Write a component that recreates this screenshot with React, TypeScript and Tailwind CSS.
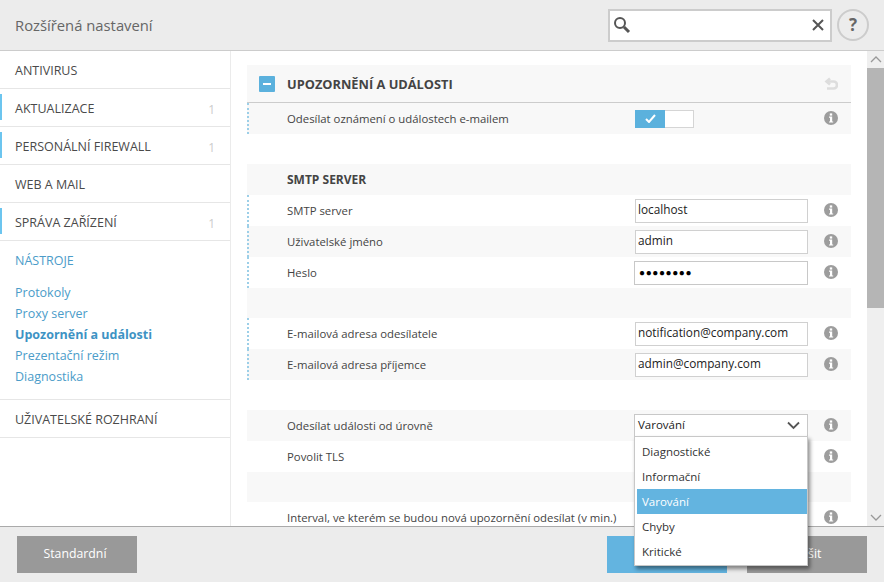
import React from "react";

const F = "font-['Open_Sans','Noto_Sans',sans-serif]";

function Info() {
  return (
    <svg width="14" height="14" viewBox="0 0 14 14" className="shrink-0">
      <circle cx="7" cy="7" r="7" fill="#9d9d9d" />
      <rect x="5.8" y="2.4" width="2.4" height="2.2" fill="#fff" />
      <path d="M5 5.6h3.2v4.8h1v1.2H5v-1.2h1V6.8H5z" fill="#fff" />
    </svg>
  );
}

function Row({ label, gray, children, info = true, bold, dot }: { label?: string; gray?: boolean; children?: React.ReactNode; info?: boolean; bold?: boolean; dot?: boolean }) {
  return (
    <div className={`flex h-[31px] shrink-0 items-center border-l-2 border-dotted ${dot ? "border-[#9ccfe8]" : "border-transparent"} ${gray ? "bg-[#f8f8f8]" : "bg-white"}`}>
      <div className={`ml-[38px] w-[347px] shrink-0 whitespace-nowrap leading-none ${bold ? "text-[12px] font-bold" : "text-[11.35px]"} text-[#444444]`}>{label}</div>
      <div className="w-[174px] shrink-0">{children}</div>
      <div className="ml-[16px] flex w-[14px] justify-center pb-px">{info && <Info />}</div>
    </div>
  );
}

function Field({ value }: { value: string }) {
  return (
    <div className="ml-px flex h-[24px] w-[173px] items-center border border-[#d0d0d0] bg-white pb-px pl-[2px] text-[11.8px] text-[#222222]">
      {value}
    </div>
  );
}

function Side({ label, mark, n }: { label: string; mark?: boolean; n?: boolean }) {
  return (
    <div className="relative flex h-[38px] items-center border-b border-[#e6e6e6] pl-[15px] pr-[15px] pt-[4px] text-[12.5px] text-[#4a4a4a]">
      {mark && <div className="absolute left-0 top-[5px] h-[26px] w-[2px] bg-[#6cc5ef]" />}
      <span className="flex-1">{label}</span>
      {n && <span className="text-[12px] text-[#cccccc]">1</span>}
    </div>
  );
}

function Btn({ label, blue }: { label: string; blue?: boolean }) {
  return (
    <div className={`flex h-[37px] w-[120px] items-center justify-center pr-[4px] text-[12.3px] text-white ${blue ? "bg-[#63b4e0]" : "bg-[#999999]"}`}>{label}</div>
  );
}

export default function App() {
  return (
    <div className={`relative flex h-[582px] w-[884px] flex-col overflow-hidden bg-white ${F}`}>
      <header className="flex h-[51px] shrink-0 items-center border-b border-[#cccccc] bg-[#ececec] pl-[15px] pr-[15px]">
        <h1 className="flex-1 text-[14.8px] text-[#666666]">Rozšířená nastavení</h1>
        <div className="flex h-[33px] w-[224px] items-center justify-between border-2 border-[#cccccc] bg-white pl-[3px] pr-[6px]">
          <svg width="18" height="18" viewBox="0 0 18 18" fill="none" stroke="#555555">
            <circle cx="7" cy="7" r="5" strokeWidth="2" />
            <path d="M11 11l5 5" strokeWidth="3" />
          </svg>
          <svg width="12" height="12" viewBox="0 0 12 12" stroke="#555555" strokeWidth="2">
            <path d="M1 1l10 10M11 1L1 11" />
          </svg>
        </div>
        <div className="ml-[5px] flex h-[32px] w-[32px] items-center justify-center rounded-full border-2 border-[#cccccc] text-[17px] font-bold text-[#666666]">?</div>
      </header>

      <div className="flex min-h-0 flex-1">
        <aside className="w-[231px] shrink-0 border-r border-[#ebebeb]">
          <Side label="ANTIVIRUS" />
          <Side label="AKTUALIZACE" mark n />
          <Side label="PERSONÁLNÍ FIREWALL" mark n />
          <Side label="WEB A MAIL" />
          <Side label="SPRÁVA ZAŘÍZENÍ" mark n />
          <div className="h-[159px] border-b border-[#e6e6e6] pl-[15px] text-[#4b9cc9]">
            <div className="pt-[10px] text-[12.5px] leading-[19px]">NÁSTROJE</div>
            <div className="mt-[12px] flex flex-col text-[12.5px] leading-[21px]">
              <span>Protokoly</span>
              <span>Proxy server</span>
              <span className="font-bold text-[#3d93c4]">Upozornění a události</span>
              <span>Prezentační režim</span>
              <span>Diagnostika</span>
            </div>
          </div>
          <Side label="UŽIVATELSKÉ ROZHRANÍ" />
        </aside>

        <main className="relative min-w-0 flex-1 overflow-hidden pl-4 pt-[14px]">
          <div className="w-[604px]">
            <div className="flex h-[38px] items-center border-b border-[#cccccc] bg-[#f8f8f8] pl-3 pr-[13px]">
              <div className="flex h-4 w-4 items-center justify-center rounded-[1px] bg-[#5bb1dd]">
                <div className="h-[2px] w-2 bg-white" />
              </div>
              <div className="ml-3 flex-1 pt-[3px] text-[12.8px] font-bold text-[#444444]">UPOZORNĚNÍ A UDÁLOSTI</div>
              <svg width="14" height="14" viewBox="0 0 14 14" fill="none" stroke="#dddddd" strokeWidth="2.6">
                <path d="M6 1.5L2.5 4.5 6 7.5" />
                <path d="M3 4.5h6.5a3.5 3.5 0 010 7H3" />
              </svg>
            </div>

            <Row label="Odesílat oznámení o událostech e-mailem" gray dot>
              <div className="ml-px flex h-[18px] w-[59px] border border-[#d5d5d5] bg-white">
                <div className="-m-px flex h-[18px] w-[30px] items-center justify-center bg-[#5bb1dd]">
                  <svg width="11" height="9" viewBox="0 0 11 9" fill="none" stroke="#fff" strokeWidth="2">
                    <path d="M1 5l3 3 6-7" />
                  </svg>
                </div>
              </div>
            </Row>
            <div className="h-[30px]" />
            <Row label="SMTP SERVER" gray bold info={false} />
            <Row label="SMTP server" dot><Field value="localhost" /></Row>
            <Row label="Uživatelské jméno" gray dot><Field value="admin" /></Row>
            <Row label="Heslo" dot>
              <div className="flex h-[24px] w-[174px] items-center border border-[#c8c8c8] bg-white pl-[4px] text-[10px] tracking-[0.6px] text-black">●●●●●●●●</div>
            </Row>
            <div className="h-[30px] bg-[#f8f8f8]" />
            <Row label="E-mailová adresa odesílatele" dot><Field value="notification@company.com" /></Row>
            <Row label="E-mailová adresa příjemce" gray dot><Field value="admin@company.com" /></Row>
            <div className="h-[30px]" />
            <Row label="Odesílat události od úrovně" gray>
              <div className="flex h-[24px] w-[174px] items-center justify-between border border-[#c8c8c8] bg-white pb-px pl-[3px] pr-[7px] text-[11.5px] text-[#222222]">
                Varování
                <svg width="13" height="9" viewBox="0 0 13 9" fill="none" stroke="#555555" strokeWidth="1.8">
                  <path d="M1 1.5l5.5 5.5L12 1.5" />
                </svg>
              </div>
            </Row>
            <Row label="Povolit TLS" />
            <div className="h-[30px] bg-[#f8f8f8]" />
            <Row label="Interval, ve kterém se budou nová upozornění odesílat (v min.)" />
          </div>
          <div className="absolute bottom-0 right-0 top-0 flex w-[17px] flex-col bg-[#efefef]">
            <div className="flex h-[17px] items-center justify-center">
              <svg width="12" height="7" viewBox="0 0 12 7" fill="none" stroke="#999999" strokeWidth="1.3">
                <path d="M1 6l5-5 5 5" />
              </svg>
            </div>
            <div className="h-[240px] bg-[#b5b5b5]" />
            <div className="flex-1" />
            <div className="flex h-[17px] items-center justify-center">
              <svg width="12" height="7" viewBox="0 0 12 7" fill="none" stroke="#999999" strokeWidth="1.3">
                <path d="M1 1l5 5 5-5" />
              </svg>
            </div>
          </div>
        </main>
      </div>

      <footer className="flex h-[56px] shrink-0 items-start border-t border-[#aaaaaa] bg-[#ececec] pl-[17px] pr-[17px] pt-[9px]">
        <Btn label="Standardní" />
        <div className="flex-1" />
        <Btn label="OK" blue />
        <div className="ml-5"><Btn label="Zrušit" /></div>
      </footer>

      <div className="absolute left-[634px] top-[436px] w-[174px] border border-[#c8c8c8] bg-white pb-px pl-[2px] pt-[2px] text-[11.5px] text-[#333333] shadow-[2px_3px_4px_rgba(0,0,0,0.45)]">
        <div className="flex h-[25px] items-center pl-[5px]">Diagnostické</div>
        <div className="flex h-[25px] items-center pl-[5px]">Informační</div>
        <div className="flex h-[25px] items-center bg-[#63b4e0] pl-[5px] text-white">Varování</div>
        <div className="flex h-[25px] items-center pl-[5px]">Chyby</div>
        <div className="flex h-[25px] items-center pl-[5px]">Kritické</div>
      </div>
    </div>
  );
}
